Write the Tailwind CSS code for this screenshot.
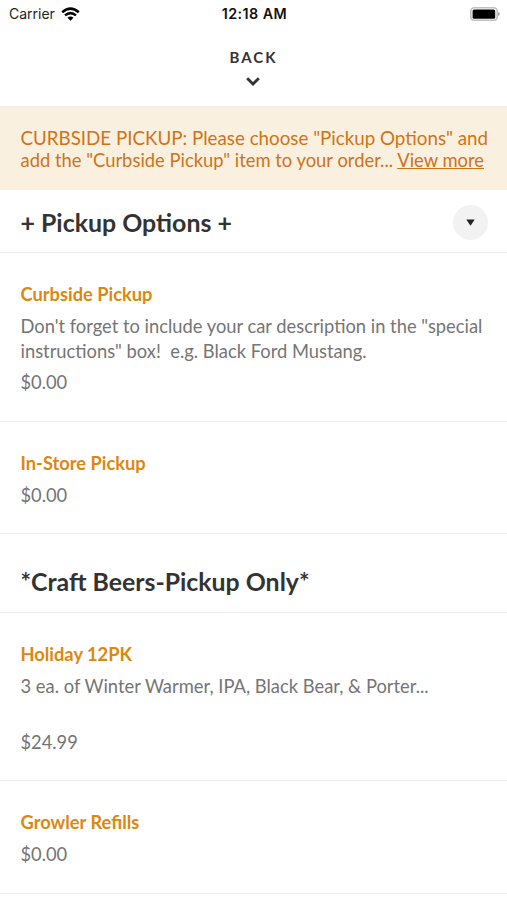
<!DOCTYPE html>
<html lang="en"><head><meta charset="utf-8"><title>Menu</title>
<script src="https://cdn.jsdelivr.net/npm/@tailwindcss/browser@4"></script></head>
<body class="bg-white">
<div class="w-[507px] h-[900px] overflow-hidden flex flex-col bg-white font-[Lato,sans-serif] text-[18.3px] text-[#757575]">
<header class="h-[106px] shrink-0 font-[Inter,sans-serif] text-black">
<div class="h-[27px] grid grid-cols-3 items-center pl-[9px] pr-[7px] text-[14px]">
<div class="flex items-center gap-[6px]"><span class="text-[#222]">Carrier</span>
<svg class="w-[19px] h-[14px]" viewBox="0 0 19 14" fill="none" stroke="#000" stroke-width="2.5"><path d="M1.2 5.2Q9.5-2 17.8 5.2M4 8.4Q9.5 3.8 15 8.4"/><path d="M6.5 10.7Q9.5 8.3 12.5 10.7L9.5 13.7Z" fill="#000" stroke="none"/></svg></div>
<div class="text-center font-semibold whitespace-nowrap text-[14.3px] tracking-[0.45px] text-[#111]">12:18 AM</div>
<div class="flex justify-end"><svg class="w-[30px] h-[14px]" viewBox="0 0 30 14"><rect x=".8" y=".8" width="26.4" height="12.6" rx="3.6" fill="none" stroke="#c0c0c0" stroke-width="1.6"/><rect x="2.6" y="2.4" width="22.6" height="9.4" rx="1.6"/><path d="M28 5v4q1.8-.7 1.8-2T28 5" fill="#aaa"/></svg></div>
</div>
<div class="flex flex-col items-center pt-[20px] pr-[2px] font-[Lato,sans-serif] text-[#333]"><div class="text-[15px] leading-[20px] font-bold tracking-[2px] pl-[2px]">BACK</div>
<svg class="w-[14px] h-[9px] mt-[10px]" viewBox="0 0 14 9" fill="none" stroke="#333" stroke-width="2.8"><path d="M1.2 1.2L7 7l5.8-5.8"/></svg></div>
</header>
<section class="h-[84px] shrink-0 bg-[#faf0df] border-t border-[#f3f0eb] text-[#d07318] pl-[20.5px] pr-[19px] pt-[20px] text-[18.75px] leading-[22px]"><div class="overflow-hidden whitespace-nowrap">CURBSIDE PICKUP: Please choose "Pickup Options" and</div><div class="whitespace-nowrap text-[18.4px]">add the "Curbside Pickup" item to your order... <span class="underline">View more</span></div></section>
<section class="h-[63px] shrink-0 border-b border-[#eeeeee] flex items-center justify-between pl-[20.5px] pr-[19px] pt-[2px]"><h2 class="text-[24.9px] font-bold text-[#333] pt-[2px]">+ Pickup Options +</h2><div class="size-[35px] rounded-full bg-[#f2f2f2] flex items-center justify-center"><svg class="w-[9px] h-[7px]" viewBox="0 0 9 7"><path d="M.3 .5h8.4L4.5 6.8Z" fill="#222"/></svg></div></section>
<article class="h-[169px] shrink-0 border-b border-[#eeeeee] pl-[20.5px] pt-[29px]"><h3 class="font-bold text-[#dc8810] leading-[24px]">Curbside Pickup</h3><p class="pt-[8px] text-[18.33px] leading-[24.5px] whitespace-pre">Don't forget to include your car description in the "special
instructions" box!  e.g. Black Ford Mustang.</p><p class="pt-[7px] leading-[24px]">$0.00</p></article>
<article class="h-[112px] shrink-0 border-b border-[#eeeeee] pl-[20.5px] pt-[29px]"><h3 class="font-bold text-[#dc8810] leading-[24px]">In-Store Pickup</h3><p class="pt-[8px] leading-[24px]">$0.00</p></article>
<section class="h-[79px] shrink-0 border-b border-[#eeeeee] flex items-center pl-[20.5px] pt-[17px]"><h2 class="text-[24.85px] font-bold text-[#333]">*Craft Beers-Pickup Only*</h2></section>
<article class="h-[168px] shrink-0 border-b border-[#eeeeee] pl-[20.5px] pt-[29px]"><h3 class="font-bold text-[#dc8810] leading-[24px]">Holiday 12PK</h3><p class="pt-[8px] text-[18.38px] leading-[24px]">3 ea. of Winter Warmer, IPA, Black Bear, &amp; Porter...</p><p class="pt-[32px] leading-[24px]">$24.99</p></article>
<article class="h-[113px] shrink-0 border-b border-[#eeeeee] pl-[20.5px] pt-[29px]"><h3 class="font-bold text-[#dc8810] leading-[24px]">Growler Refills</h3><p class="pt-[8px] leading-[24px]">$0.00</p></article>
</div></body></html>
